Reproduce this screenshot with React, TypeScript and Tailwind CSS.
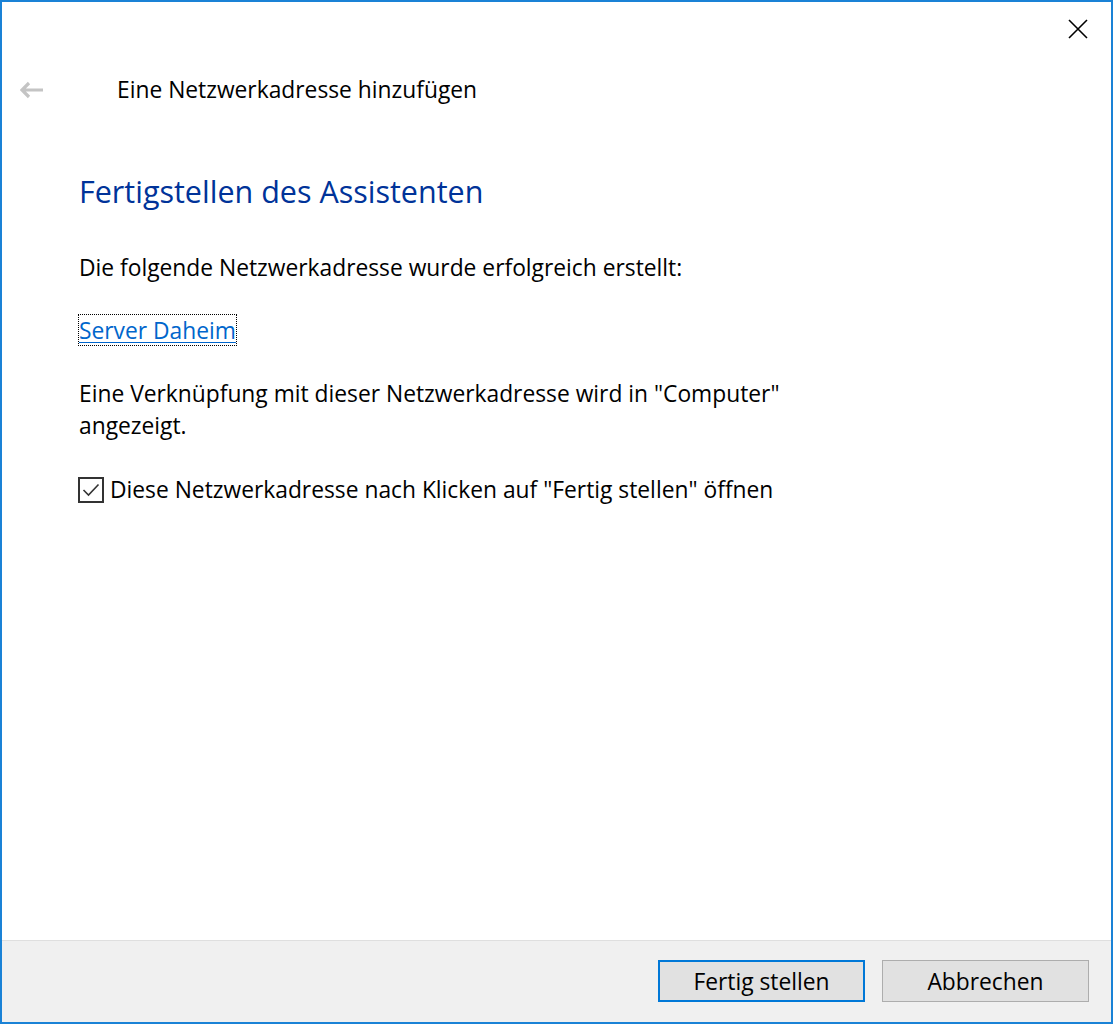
import React from "react"

const font = { fontFamily: '"Open Sans", "Noto Sans", "Liberation Sans", sans-serif' }

function CloseIcon() {
  return (
    <svg width="20" height="20" viewBox="0 0 20 20" className="block">
      <path d="M1 1 L19 19 M19 1 L1 19" stroke="#000" strokeWidth="1.6" fill="none" />
    </svg>
  )
}

function BackArrow() {
  return (
    <svg width="24" height="18" viewBox="0 0 24 18" className="block">
      <path d="M9 2 L2 9 L9 16 M2 9 L23 9" stroke="#c4c4c4" strokeWidth="3.2" fill="none" />
    </svg>
  )
}

function CheckBox() {
  return (
    <div className="w-[26px] h-[26px] border-2 border-[#333333] bg-white flex items-center justify-center shrink-0 -ml-px">
      <svg width="18" height="14" viewBox="0 0 18 14" className="block">
        <path d="M1.5 7 L6.5 12 L16.5 1.5" stroke="#333" strokeWidth="1.6" fill="none" />
      </svg>
    </div>
  )
}

export default function App() {
  return (
    <div
      style={font}
      className="w-[1113px] h-[1024px] border-2 border-[#1a82d6] bg-white flex flex-col text-black"
    >
      {/* Title bar */}
      <div className="h-[68px] flex justify-end items-start pt-[17px] pr-[23px]">
        <CloseIcon />
      </div>

      {/* Wizard header */}
      <div className="h-[40px] flex items-center">
        <div className="w-[115px] pl-[18px]">
          <BackArrow />
        </div>
        <span className="text-[22.8px] leading-[40px]">Eine Netzwerkadresse hinzufügen</span>
      </div>

      {/* Content */}
      <main className="flex-1 pl-[77px]">
        <h1 className="mt-[61px] text-[30.5px] leading-[40px] text-[#003399] font-normal">
          Fertigstellen des Assistenten
        </h1>
        <p className="mt-[41px] text-[22.8px] leading-[32px]">
          Die folgende Netzwerkadresse wurde erfolgreich erstellt:
        </p>
        <div className="mt-[30px]">
          <a
            href="#"
            className="inline-block -ml-px h-[32px] leading-[31px] border border-dotted border-black text-[22.8px] text-[#0066cc] underline underline-offset-[3px] decoration-1"
          >
            Server Daheim
          </a>
        </div>
        <p className="mt-[32px] text-[22.8px] leading-[32px]">
          Eine Verknüpfung mit dieser Netzwerkadresse wird in "Computer"
          <br />
          angezeigt.
        </p>
        <label className="mt-[32px] h-[32px] flex items-center gap-[6px]">
          <CheckBox />
          <span className="text-[22.8px] leading-[32px]">
            Diese Netzwerkadresse nach Klicken auf "Fertig stellen" öffnen
          </span>
        </label>
      </main>

      {/* Footer */}
      <footer className="h-[82px] border-t border-[#dfdfdf] bg-[#f0f0f0] flex justify-end items-start pt-[19px] pr-[22px] gap-[17px]">
        <button className="w-[207px] h-[42px] pt-[3px] border-2 border-[#0078d7] bg-[#e1e1e1] text-[22.8px] leading-none">
          Fertig stellen
        </button>
        <button className="w-[207px] h-[42px] pt-[3px] border border-[#adadad] bg-[#e1e1e1] text-[22.8px] leading-none">
          Abbrechen
        </button>
      </footer>
    </div>
  )
}
